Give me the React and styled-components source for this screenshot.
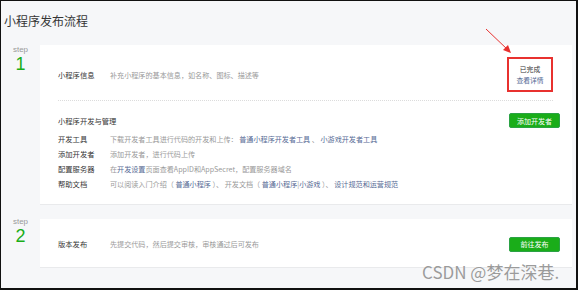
import React from "react";
import styled, { createGlobalStyle } from "styled-components";

const GlobalStyle = createGlobalStyle`
  html, body {
    margin: 0;
    padding: 0;
    background: #ffffff;
  }
  body {
    font-family: "Noto Sans CJK SC", "Noto Sans", "Liberation Sans", sans-serif;
  }
`;

const green = "#1aad19";
const link = "#576b95";

export default function App() {
  return (
    <>
      <GlobalStyle />
      <Frame>
        <Title>小程序发布流程</Title>

        <StepRow>
          <StepMarker>
            <StepWord>step</StepWord>
            <StepNum>1</StepNum>
          </StepMarker>
          <Card>
            <InfoRow>
              <Label>小程序信息</Label>
              <Desc>补充小程序的基本信息，如名称、图标、描述等</Desc>
              <Status>
                <span>已完成</span>
                <Link>查看详情</Link>
              </Status>
            </InfoRow>

            <SectionHead>
              <Label>小程序开发与管理</Label>
              <Button>添加开发者</Button>
            </SectionHead>
            <Line>
              <Label>开发工具</Label>
              <Desc>
                下载开发者工具进行代码的开发和上传： <Link>普通小程序开发者工具</Link>
                {" 、 "}
                <Link>小游戏开发者工具</Link>
              </Desc>
            </Line>
            <Line>
              <Label>添加开发者</Label>
              <Desc>添加开发者，进行代码上传</Desc>
            </Line>
            <Line>
              <Label>配置服务器</Label>
              <Desc>
                在<Link>开发设置</Link>页面查看AppID和AppSecret，配置服务器域名
              </Desc>
            </Line>
            <Line>
              <Label>帮助文档</Label>
              <Desc>
                可以阅读入门介绍（ <Link>普通小程序</Link> ）、 开发文档（ <Link>普通小程序</Link>|<Link>小游戏</Link> ）、 <Link>设计规范和运营规范</Link>
              </Desc>
            </Line>
          </Card>
        </StepRow>

        <StepRow $gap>
          <StepMarker $tight>
            <StepWord>step</StepWord>
            <StepNum>2</StepNum>
          </StepMarker>
          <Card $small>
            <Line $tall>
              <Label>版本发布</Label>
              <Desc>先提交代码，然后提交审核，审核通过后可发布</Desc>
              <Button $push>前往发布</Button>
            </Line>
          </Card>
        </StepRow>

        <Arrow width="30" height="30" viewBox="0 0 30 30">
          <line x1="2" y1="1" x2="24" y2="22" stroke="#e8312f" strokeWidth="1" />
          <polygon points="27,25 19,22 24,17" fill="#e8312f" />
        </Arrow>
        <Watermark>CSDN @梦在深巷.</Watermark>
      </Frame>
    </>
  );
}

const Frame = styled.div`
  position: relative;
  box-sizing: border-box;
  width: 578px;
  height: 290px;
  overflow: hidden;
  background: #f6f7f9;
  border-style: solid;
  border-color: #111;
  border-width: 1px 2px 2px 1px;
`;

const Title = styled.div`
  box-sizing: border-box;
  height: 44px;
  padding: 12px 0 0 3px;
  font-size: 12px;
  line-height: 16px;
  color: #353535;
`;

const StepRow = styled.div`
  display: flex;
  margin-top: ${(p) => (p.$gap ? "14px" : "0")};
  margin-right: 4px;
`;

const StepMarker = styled.div`
  width: 39px;
  flex: none;
  display: flex;
  flex-direction: column;
  align-items: center;
  margin-top: ${(p) => (p.$tight ? "-2px" : "0")};
`;

const StepWord = styled.div`
  font-family: "Liberation Sans", sans-serif;
  font-size: 8px;
  line-height: 9px;
  color: #9a9a9a;
`;

const StepNum = styled.div`
  font-family: "Liberation Sans", sans-serif;
  font-size: 18px;
  line-height: 20px;
  color: ${green};
`;

const Card = styled.div`
  flex: 1;
  box-sizing: border-box;
  background: #fff;
  border-bottom: 1px solid #e9eaec;
  padding: ${(p) => (p.$small ? "18px 12px 16px 18px" : "12px 12px 13px 18px")};
`;

const InfoRow = styled.div`
  display: flex;
  align-items: center;
  margin-right: 7px;
  padding-bottom: 8px;
  border-bottom: 1px dotted #dcdcdc;
`;

const Label = styled.div`
  width: 52px;
  flex: none;
  white-space: nowrap;
  font-size: 7.3px;
  color: #353535;
`;

const Desc = styled.div`
  font-size: 7.1px;
  color: #9a9a9a;
  white-space: nowrap;
`;

const Link = styled.span`
  color: ${link};
`;

const Status = styled.div`
  box-sizing: border-box;
  margin-left: auto;
  width: 46px;
  height: 35px;
  border: 2px solid #e8312f;
  display: flex;
  flex-direction: column;
  align-items: center;
  justify-content: center;
  gap: 2px;
  font-size: 6.8px;
  line-height: 9px;
  color: #353535;
`;

const SectionHead = styled.div`
  display: flex;
  align-items: center;
  justify-content: space-between;
  margin-top: 12px;
  margin-bottom: 3px;
`;

const Line = styled.div`
  display: flex;
  align-items: center;
  height: ${(p) => (p.$tall ? "14px" : "15px")};
`;

const Button = styled.div`
  box-sizing: border-box;
  width: 51px;
  height: 15px;
  margin-left: ${(p) => (p.$push ? "auto" : "0")};
  display: flex;
  align-items: center;
  justify-content: center;
  background: ${green};
  border: 1px solid #2ba245;
  border-radius: 2px;
  color: #fff;
  font-size: 7px;
`;

const Arrow = styled.svg`
  position: absolute;
  left: 483px;
  top: 27px;
`;

const Watermark = styled.div`
  position: absolute;
  left: 421px;
  top: 261px;
  font-family: "Noto Sans CJK SC", "Noto Sans", sans-serif;
  font-size: 17px;
  line-height: 20px;
  color: #9b9b9b;
  white-space: nowrap;
  text-shadow: 0 0 1px #fff;
`;
